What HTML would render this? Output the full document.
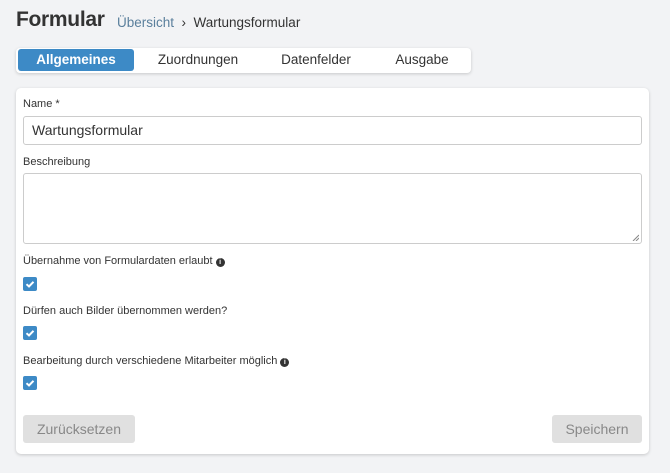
<!DOCTYPE html>
<html><head><meta charset="utf-8"><style>
*{box-sizing:border-box;margin:0;padding:0}
body{width:670px;height:473px;background:#f2f3f5;font-family:"Liberation Sans",sans-serif;position:relative;overflow:hidden;color:#333}
.a{position:absolute}
h1{position:absolute;left:16px;top:8px;font-size:21px;font-weight:bold;color:#333;letter-spacing:-0.3px}
.bc{left:117px;top:15px;font-size:13.5px;color:#333}
.bc span{color:#5a7f9c}
.tabs{left:16px;top:48px;width:455px;height:25px;background:#fff;border-radius:4px;box-shadow:0 1px 3px rgba(0,0,0,.18)}
.tab{position:absolute;top:1px;height:22px;line-height:22px;font-size:13.5px;text-align:center;color:#333}
.act{background:#3d8ac6;color:#fff;border-radius:3px;font-weight:bold}
.card{left:16px;top:88px;width:633px;height:366px;background:#fff;border-radius:5px;box-shadow:0 1px 3px rgba(0,0,0,.18)}
.lbl{font-size:11px;color:#333}
.in{border:1px solid #ccc;border-radius:3px;background:#fff}
.cb{width:14px;height:14px;background:#3d8ac6;border-radius:2px}
.btn{background:#e0e0e0;border-radius:3px;color:#888;font-size:14px;text-align:center;line-height:28px;height:28px}
.i{display:inline-block;width:9px;height:9px;border-radius:50%;background:#333;color:#fff;font-size:7px;line-height:9px;text-align:center;font-weight:bold;vertical-align:0px;margin-left:3px}
</style></head><body>
<h1>Formular</h1>
<div class="a bc"><span>Übersicht</span> &nbsp;›&nbsp; Wartungsformular</div>
<div class="a tabs">
<div class="tab act" style="left:2px;width:116px">Allgemeines</div>
<div class="tab" style="left:130px;width:104px">Zuordnungen</div>
<div class="tab" style="left:255px;width:90px">Datenfelder</div>
<div class="tab" style="left:370px;width:72px">Ausgabe</div>
</div>
<div class="a card"></div>
<div class="a lbl" style="left:23px;top:98px">Name *</div>
<div class="a in" style="left:23px;top:116px;width:619px;height:29px;padding-left:8px;line-height:27px;font-size:14px">Wartungsformular</div>
<div class="a lbl" style="left:23px;top:156px">Beschreibung</div>
<div class="a in" style="left:23px;top:173px;width:619px;height:71px"><svg class="a" style="right:2px;bottom:2px" width="7" height="7"><path d="M1 7L7 1M4 7L7 4" stroke="#888" stroke-width="1"/></svg></div>
<div class="a lbl" style="left:23px;top:255px">Übernahme von Formulardaten erlaubt<span class="i">i</span></div>
<div class="a cb" style="left:23px;top:277px"><svg width="14" height="14"><path d="M3.5 7.2L6 9.5L10.5 4.8" stroke="#fff" stroke-width="2" fill="none"/></svg></div>
<div class="a lbl" style="left:23px;top:305px">Dürfen auch Bilder übernommen werden?</div>
<div class="a cb" style="left:23px;top:326px"><svg width="14" height="14"><path d="M3.5 7.2L6 9.5L10.5 4.8" stroke="#fff" stroke-width="2" fill="none"/></svg></div>
<div class="a lbl" style="left:23px;top:355px">Bearbeitung durch verschiedene Mitarbeiter möglich<span class="i">i</span></div>
<div class="a cb" style="left:23px;top:376px"><svg width="14" height="14"><path d="M3.5 7.2L6 9.5L10.5 4.8" stroke="#fff" stroke-width="2" fill="none"/></svg></div>
<div class="a btn" style="left:23px;top:415px;width:112px">Zurücksetzen</div>
<div class="a btn" style="left:552px;top:415px;width:90px">Speichern</div>
</body></html>
